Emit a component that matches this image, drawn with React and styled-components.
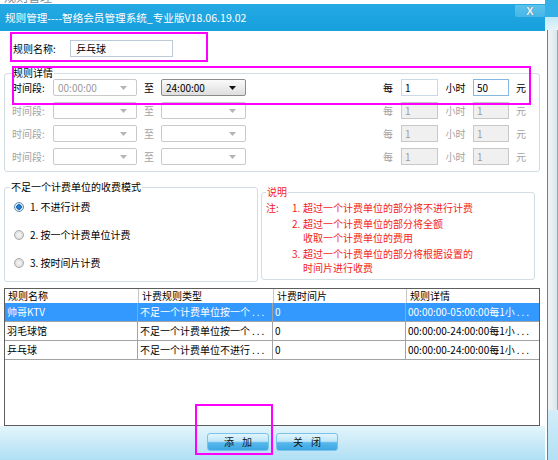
import React from 'react'
import styled, { createGlobalStyle } from 'styled-components'

const GlobalStyle = createGlobalStyle`
  html, body {
    margin: 0;
    padding: 0;
    background: #fff;
  }
  body {
    font-family: "Noto Sans CJK SC", "Liberation Sans", sans-serif;
    font-size: 10px;
    color: #000;
  }
`

const timeRows = [
  { from: '00:00:00', to: '24:00:00', per: '1', price: '50', active: true },
  { from: '', to: '', per: '1', price: '1' },
  { from: '', to: '', per: '1', price: '1' },
  { from: '', to: '', per: '1', price: '1' },
]

const rules = [
  { name: '帅哥KTV', type: '不足一个计费单位按一个', slice: '0', detail: '00:00:00-05:00:00每1小', selected: true },
  { name: '羽毛球馆', type: '不足一个计费单位按一个', slice: '0', detail: '00:00:00-24:00:00每1小' },
  { name: '乒乓球', type: '不足一个计费单位不进行', slice: '0', detail: '00:00:00-24:00:00每1小' },
]

const Arrow = ({ dark }) => (
  <svg width="7" height="4" viewBox="0 0 7 4">
    <path d="M0 0 L7 0 L3.5 4 Z" fill={dark ? '#111' : '#b4b4b4'} />
  </svg>
)

const App = () => {
  return (
    <Frame>
      <GlobalStyle />
      <Dialog>
        <TopStrip>
          <GhostText>规则管理</GhostText>
        </TopStrip>
        <TitleBar>
          <TitleText>规则管理----智络会员管理系统_专业版V18.06.19.02</TitleText>
          <CloseButton>X</CloseButton>
        </TitleBar>
        <Body>
          <NameRow>
            <FieldLabel>规则名称:</FieldLabel>
            <TextBox>乒乓球</TextBox>
          </NameRow>

          <DetailGroup>
            <Legend>规则详情</Legend>
            {timeRows.map((row, i) => {
              const off = !row.active
              return (
                <TimeRow key={i}>
                  <Label $off={off}>时间段:</Label>
                  <Select>
                    <SelectValue>{row.from}</SelectValue>
                    <Arrow />
                  </Select>
                  <Label $off={off} $center>至</Label>
                  <Select $enabled={row.active}>
                    <SelectValue $dark>{row.to}</SelectValue>
                    <Arrow dark={row.active} />
                  </Select>
                  <span />
                  <Label $off={off}>每</Label>
                  <NumBox $off={off}>{row.per}</NumBox>
                  <Label $off={off} $center>小时</Label>
                  <NumBox $off={off} $focus={row.active}>{row.price}</NumBox>
                  <Label $off={off} $pad>元</Label>
                </TimeRow>
              )
            })}
          </DetailGroup>

          <ModeRow>
            <ModeGroup>
              <Legend>不足一个计费单位的收费模式</Legend>
              <RadioList>
                <Option>
                  <Radio $checked />
                  1. 不进行计费
                </Option>
                <Option>
                  <Radio />
                  2. 按一个计费单位计费
                </Option>
                <Option>
                  <Radio />
                  3. 按时间片计费
                </Option>
              </RadioList>
            </ModeGroup>
            <NoteGroup>
              <NoteLegend>说明</NoteLegend>
              <NoteGrid>
                <NoteHead>注:</NoteHead>
                <NoteList>
                  <NoteItem>
                    <NoteNum>1.</NoteNum>
                    <span>超过一个计费单位的部分将不进行计费</span>
                  </NoteItem>
                  <NoteItem>
                    <NoteNum>2.</NoteNum>
                    <span>
                      超过一个计费单位的部分将全额
                      <br />
                      收取一个计费单位的费用
                    </span>
                  </NoteItem>
                  <NoteItem>
                    <NoteNum>3.</NoteNum>
                    <span>
                      超过一个计费单位的部分将根据设置的
                      <br />
                      时间片进行收费
                    </span>
                  </NoteItem>
                </NoteList>
              </NoteGrid>
            </NoteGroup>
          </ModeRow>

          <Table>
            <HeaderRow>
              <HeadCell>规则名称</HeadCell>
              <HeadCell $sep>计费规则类型</HeadCell>
              <HeadCell $sep>计费时间片</HeadCell>
              <HeadCell $sep>规则详情</HeadCell>
            </HeaderRow>
            {rules.map((r) => (
              <DataRow key={r.name} $selected={r.selected}>
                <Cell>{r.name}</Cell>
                <Cell>
                  {r.type}
                  <Dots>...</Dots>
                </Cell>
                <Cell>{r.slice}</Cell>
                <Cell $last>
                  {r.detail}
                  <Dots>...</Dots>
                </Cell>
              </DataRow>
            ))}
          </Table>
        </Body>
        <Footer>
          <Button>添加</Button>
          <Button>关闭</Button>
        </Footer>
      </Dialog>

      <RightStrip>
        <StripTop />
        <StripBand />
        <StripBody />
        <StripBottom />
      </RightStrip>

      <Marker style={{ left: 10, top: 32, width: 198, height: 30 }} />
      <Marker style={{ left: 12, top: 66, width: 519, height: 39 }} />
      <Marker style={{ left: 195, top: 404, width: 78, height: 51 }} />
    </Frame>
  )
}

const Frame = styled.div`
  position: relative;
  width: 558px;
  height: 460px;
  display: flex;
  overflow: hidden;
  background: #fff;
`
const Dialog = styled.div`
  width: 545px;
  display: flex;
  flex-direction: column;
`
const TopStrip = styled.div`
  height: 4px;
  overflow: hidden;
  background: #fff;
  padding-left: 4px;
`
const GhostText = styled.div`
  margin-top: -9px;
  font-size: 12px;
  line-height: 12px;
  color: #7a8b99;
`
const TitleBar = styled.div`
  height: 27px;
  display: flex;
  align-items: flex-start;
  padding-left: 5px;
  background: linear-gradient(#25a9e4, #16a0dc);
`
const TitleText = styled.div`
  line-height: 27px;
  font-size: 10.6px;
  color: #fff;
  white-space: nowrap;
`
const CloseButton = styled.div`
  margin-left: auto;
  margin-top: 1px;
  width: 30px;
  height: 12px;
  background: linear-gradient(#5cc2ec, #46b6e6);
  border-radius: 0 0 2px 2px;
  font-family: "Liberation Sans", sans-serif;
  font-weight: bold;
  font-size: 11px;
  line-height: 12px;
  text-align: center;
  color: #f4f4f4;
  text-shadow: 0 0 1px #4d6373;
`
const Body = styled.div`
  flex: 1;
  display: flex;
  flex-direction: column;
  padding: 0 5px 0 4px;
  background: #fff;
  min-height: 0;
`
const NameRow = styled.div`
  margin-top: 9px;
  height: 17px;
  display: flex;
  align-items: center;
  padding-left: 9px;
`
const FieldLabel = styled.div`
  width: 57px;
  line-height: 17px;
`
const TextBox = styled.div`
  box-sizing: border-box;
  width: 103px;
  height: 17px;
  border: 1px solid #bccbd7;
  padding-left: 5px;
  line-height: 15px;
`
const Group = styled.fieldset`
  margin: 0;
  border: 1px solid #d3dde4;
  border-radius: 3px;
  min-inline-size: 0;
`
const Legend = styled.legend`
  padding: 0 1px;
  line-height: 12px;
  font-size: 10px;
`
const DetailGroup = styled(Group)`
  margin-top: 10px;
  padding: 0 0 6px 7px;
  display: flex;
  flex-direction: column;
  gap: 6px;
`
const TimeRow = styled.div`
  height: 17px;
  display: grid;
  grid-template-columns: 41px 84px 24px 85px 1fr 18px 37px 35px 36px 30px;
  align-items: center;
`
const Label = styled.div`
  line-height: 17px;
  color: ${(p) => (p.$off ? '#a3a3a3' : '#000')};
  text-align: ${(p) => (p.$center ? 'center' : 'left')};
  padding-left: ${(p) => (p.$pad ? '7px' : '0')};
`
const Select = styled.div`
  box-sizing: border-box;
  height: 17px;
  display: flex;
  align-items: center;
  justify-content: space-between;
  padding: 0 9px 0 4px;
  border: 1px solid ${(p) => (p.$enabled ? '#8c8c8c' : '#c9c9c9')};
  border-radius: 2px;
  background: ${(p) => (p.$enabled ? 'linear-gradient(#fafafa, #dedede)' : '#fff')};
`
const SelectValue = styled.span`
  line-height: 15px;
  color: ${(p) => (p.$dark ? '#000' : '#9a9a9a')};
`
const NumBox = styled.div`
  box-sizing: border-box;
  height: 17px;
  padding-left: 3px;
  line-height: 15px;
  border: 1px solid ${(p) => (p.$focus ? '#86b7e2' : p.$off ? '#c8c8c8' : '#cad9e6')};
  background: ${(p) => (p.$off ? '#f0f0f0' : '#fff')};
  color: ${(p) => (p.$off ? '#9e9e9e' : '#000')};
`
const ModeRow = styled.div`
  margin-top: 9px;
  display: flex;
  gap: 3px;
`
const ModeGroup = styled(Group)`
  width: 254px;
  box-sizing: border-box;
  padding: 6px 0 10px 5px;
`
const RadioList = styled.div`
  display: flex;
  flex-direction: column;
  gap: 12px;
  padding-left: 4px;
`
const Option = styled.div`
  height: 16px;
  display: flex;
  align-items: center;
  gap: 6px;
  line-height: 16px;
`
const Radio = styled.span`
  box-sizing: border-box;
  width: 10px;
  height: 10px;
  border-radius: 50%;
  border: 1px solid ${(p) => (p.$checked ? '#5d87ad' : '#a9a9a9')};
  background: ${(p) =>
    p.$checked
      ? 'radial-gradient(circle, #2a8ee0 0, #1363b4 2.5px, #dbe8f3 3px, #f4f7fa 5px)'
      : 'radial-gradient(circle, #f6f6f6 0, #d9d9d9 5px)'};
`
const NoteGroup = styled(Group)`
  flex: 1;
  margin: 5px 5px 2px 0;
  padding: 3px 0 0 4px;
  color: #f41b1b;
`
const NoteLegend = styled(Legend)`
  color: #f41b1b;
`
const NoteGrid = styled.div`
  display: grid;
  grid-template-columns: 26px 1fr;
  line-height: 14px;
`
const NoteHead = styled.div``
const NoteList = styled.div`
  display: flex;
  flex-direction: column;
  gap: 2px;
`
const NoteItem = styled.div`
  display: flex;
`
const NoteNum = styled.span`
  width: 11px;
  flex: none;
`
const Table = styled.div`
  margin-top: 6px;
  flex: 1;
  border: 1px solid #5e5e5e;
  background: #fff;
`
const HeaderRow = styled.div`
  height: 14px;
  display: grid;
  grid-template-columns: 133px 135px 133px 1fr;
`
const HeadCell = styled.div`
  line-height: 14px;
  padding-left: 3px;
  border-left: ${(p) => (p.$sep ? '1px solid #c7c7c7' : 'none')};
  white-space: nowrap;
`
const DataRow = styled.div`
  height: 18px;
  display: grid;
  grid-template-columns: 133px 135px 133px 1fr;
  border-bottom: 1px solid #a3a3a3;
  background: ${(p) => (p.$selected ? '#3399ff' : '#fff')};
  color: ${(p) => (p.$selected ? '#fff' : '#000')};
`
const Cell = styled.div`
  line-height: 18px;
  padding-left: 2px;
  white-space: nowrap;
  overflow: hidden;
  border-right: ${(p) => (p.$last ? 'none' : '1px solid #a3a3a3')};
`
const Dots = styled.span`
  letter-spacing: 2px;
  margin-left: 2px;
`
const Footer = styled.div`
  height: 34px;
  box-sizing: border-box;
  padding-top: 7px;
  display: flex;
  justify-content: center;
  align-items: flex-start;
  gap: 7px;
  background: linear-gradient(#e4f5fc, #afdff4);
`
const Button = styled.div`
  box-sizing: border-box;
  width: 62px;
  height: 18px;
  padding-left: 8px;
  border: 1px solid #79c2ea;
  border-radius: 3px;
  background: linear-gradient(#e2f5fd 0%, #bfe6f8 45%, #57b7ec 55%, #3ca7e4 100%);
  text-align: center;
  line-height: 16px;
  font-size: 10px;
  letter-spacing: 8px;
  color: #111;
`
const RightStrip = styled.div`
  width: 13px;
  display: flex;
  flex-direction: column;
`
const StripTop = styled.div`
  height: 17px;
  background: #33b1e7;
`
const StripBand = styled.div`
  height: 13px;
  background: linear-gradient(#c4e8f7, #e6f4fa);
`
const StripBody = styled.div`
  flex: 1;
  margin-left: 2px;
  border-left: 1px solid #6f7d87;
  border-right: 1px solid #9aa8b2;
  background: linear-gradient(to right, #f2f5f7, #dce5eb);
`
const StripBottom = styled.div`
  height: 50px;
  margin-left: 2px;
  border-left: 1px solid #6f7d87;
  background: linear-gradient(#d4eef9, #b2e0f4);
`
const Marker = styled.div`
  position: absolute;
  box-sizing: border-box;
  border: 2px solid #f0f;
  pointer-events: none;
`

export default App
